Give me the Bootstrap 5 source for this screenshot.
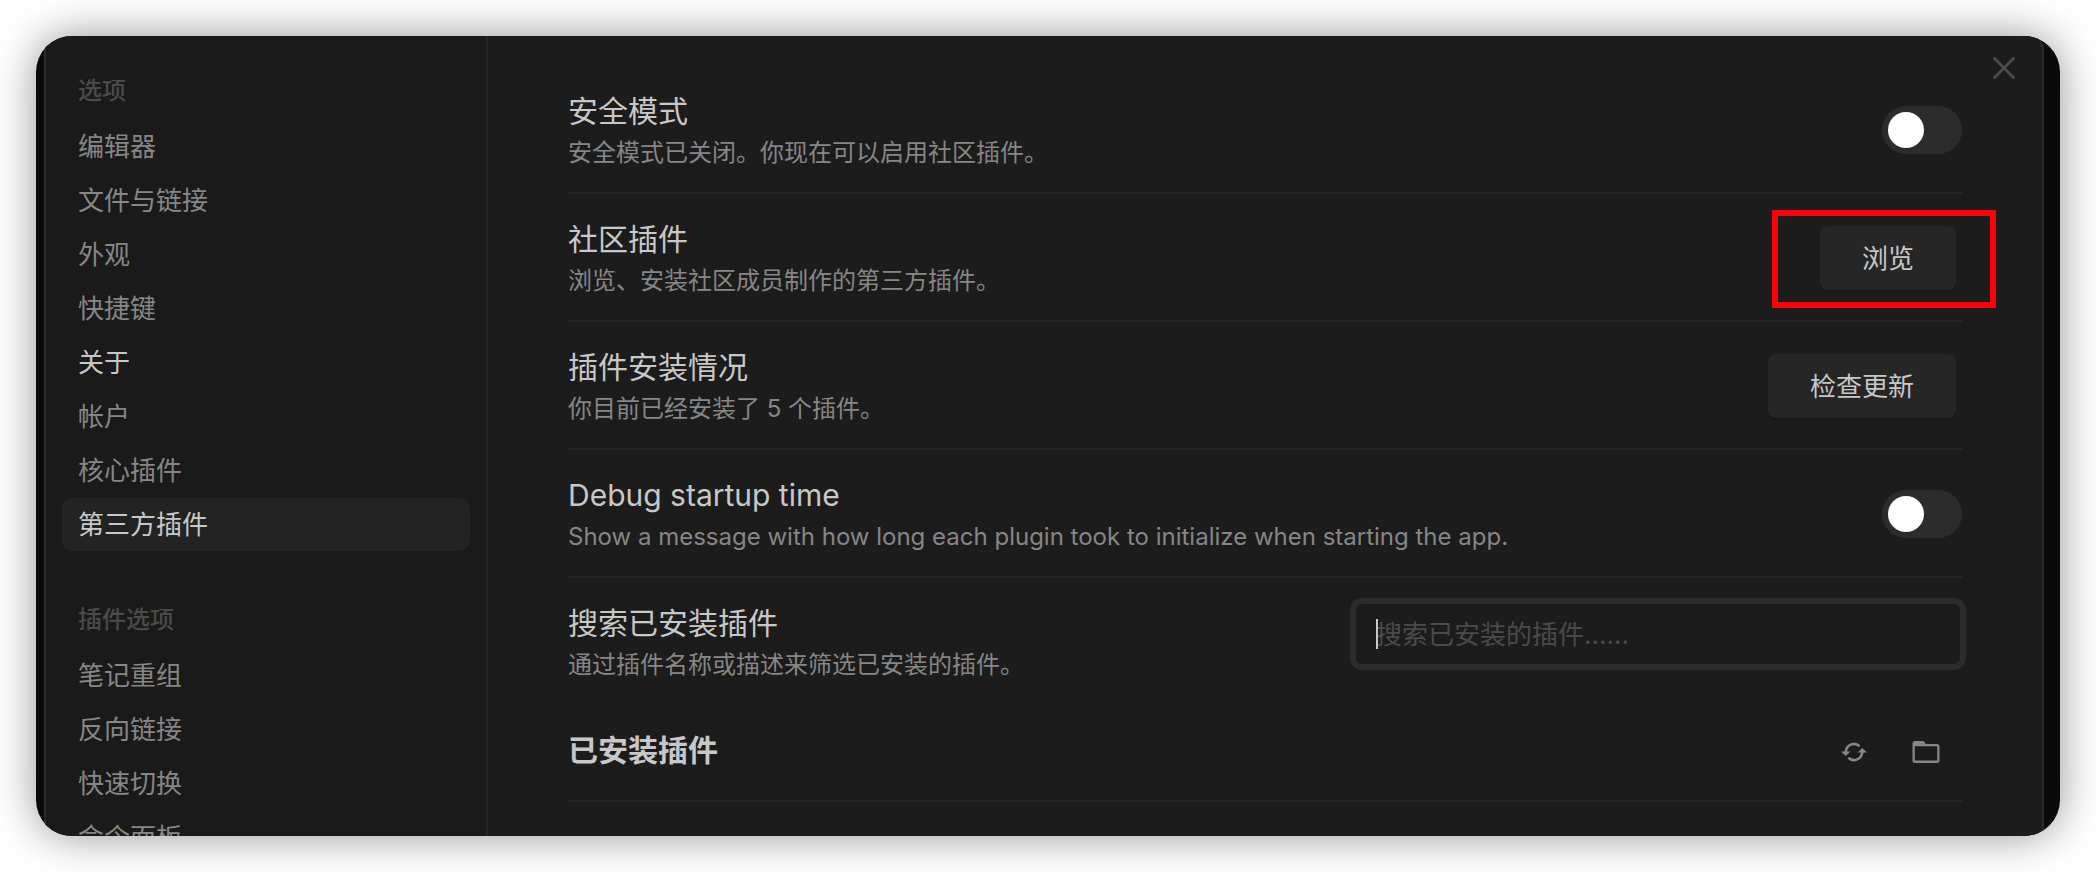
<!DOCTYPE html>
<html lang="zh-CN">
<head>
<meta charset="utf-8">
<meta name="viewport" content="width=device-width, initial-scale=1">
<title>设置 - 第三方插件</title>
<link rel="stylesheet" href="https://cdn.jsdelivr.net/npm/bootstrap@5.3.0/dist/css/bootstrap.min.css">
<style>
  :root {
    --text-normal: #c8c8c8;
    --text-muted: #868686;
    --text-faint: #4a4a4a;
    --line: #262626;
    --frame-line: #2c2c2c;
  }
  body {
    background: #fff;
    color: var(--text-normal);
    font-family: Inter, "Noto Sans CJK SC", sans-serif;
    font-size: 26px;
    padding: 36px;
  }
  .app-window {
    height: calc(100vh - 72px);
    background: #0a0a0a;
    border-radius: 36px;
    box-shadow: 0 0 44px rgba(0, 0, 0, .42);
  }
  .app-clip {
    border-radius: 36px;
    padding: 0 16px 0 8px;
  }
  .settings-modal {
    background: #1c1c1c;
    border: solid var(--frame-line);
    border-width: 0 2px;
    border-top-right-radius: 14px;
  }
  .settings-side {
    width: 442px;
    padding: 37px 16px 0;
    background: #1a1a1a;
    border-right: 2px solid var(--line);
  }
  .side-heading {
    margin: 0 16px 11px;
    font-size: 24px;
    line-height: 36px;
    font-weight: 500;
    color: var(--text-faint);
  }
  .side-group + .side-group { margin-top: 51px; }
  .side-group .nav { gap: 1px; }
  .side-group .nav-link {
    padding: 0 16px;
    line-height: 53px;
    border-radius: 10px;
    color: var(--text-muted);
  }
  .side-group .nav-link.bright,
  .side-group .nav-link.active { color: var(--text-normal); }
  .side-group .nav-link.active { background: #232323; }
  .settings-main { padding: 30px 80px 0; }
  .setting-row {
    padding: 22px 0 21px;
    border-bottom: 2px solid var(--line);
  }
  .setting-row.no-line { border-bottom: 0; }
  .setting-text { padding-top: 4px; }
  .setting-name {
    margin: 0 0 4px;
    font-size: 30px;
    line-height: 39px;
    font-weight: 400;
  }
  .setting-desc {
    margin: 0;
    font-size: 24px;
    line-height: 36px;
    color: var(--text-muted);
  }
  .toggle.form-check-input {
    width: 80px;
    height: 48px;
    margin: 0;
    padding: 6px;
    background: #2c2c2c;
    border: 0;
    border-radius: 24px;
  }
  .toggle::before {
    content: "";
    display: block;
    width: 36px;
    height: 36px;
    border-radius: 50%;
    background: #fff;
  }
  .toggle:checked::before { margin-left: auto; }
  .action-btn {
    padding: 2px 42px 0;
    margin-right: 6px;
    border: 0;
    border-radius: 8px;
    font-size: 26px;
    line-height: 62px;
    color: var(--text-normal);
    background: #262626;
    box-shadow: 0 2px 3px rgba(0, 0, 0, .2);
  }
  .highlight-box {
    top: -16px;
    right: -34px;
    bottom: -18px;
    left: -48px;
    border: 6px solid #fe0009;
    pointer-events: none;
  }
  .search-wrap {
    width: 608px;
    margin-top: 2px;
  }
  .search-wrap .form-control {
    height: 64px;
    padding: 0 20px;
    font-size: 26px;
    color: var(--text-normal);
    background: #1c1c1c;
    border: 2px solid var(--frame-line);
    border-radius: 8px;
    box-shadow: 0 0 0 4px var(--frame-line);
  }
  .search-wrap .form-control::placeholder { color: var(--text-faint); }
  .search-caret {
    left: 22px;
    top: 17px;
    width: 2px;
    height: 30px;
    background: var(--text-normal);
  }
  .installed-row {
    height: 98px;
    border-bottom: 2px solid var(--line);
  }
  .installed-row h2 {
    padding-bottom: 4px;
    font-size: 30px;
    line-height: 39px;
    font-weight: 700;
  }
  .icon-btn {
    width: 72px;
    height: 48px;
    border: 0;
    color: var(--text-muted);
  }
  .close-btn {
    top: 12px;
    right: 18px;
    width: 40px;
    height: 40px;
    color: #4c4c4c;
  }
</style>
</head>
<body>
<div class="app-window">
  <div class="app-clip h-100 overflow-hidden">
    <div class="settings-modal position-relative d-flex h-100">
      <aside class="settings-side flex-shrink-0">
        <section class="side-group">
          <h2 class="side-heading">选项</h2>
          <nav class="nav flex-column">
            <a class="nav-link" href="#editor">编辑器</a>
            <a class="nav-link" href="#files">文件与链接</a>
            <a class="nav-link" href="#appearance">外观</a>
            <a class="nav-link" href="#hotkeys">快捷键</a>
            <a class="nav-link bright" href="#about">关于</a>
            <a class="nav-link" href="#account">帐户</a>
            <a class="nav-link" href="#core">核心插件</a>
            <a class="nav-link active" aria-current="page" href="#community">第三方插件</a>
          </nav>
        </section>
        <section class="side-group">
          <h2 class="side-heading">插件选项</h2>
          <nav class="nav flex-column">
            <a class="nav-link" href="#composer">笔记重组</a>
            <a class="nav-link" href="#backlinks">反向链接</a>
            <a class="nav-link" href="#switcher">快速切换</a>
            <a class="nav-link" href="#palette">命令面板</a>
          </nav>
        </section>
      </aside>

      <main class="settings-main flex-grow-1">
        <div class="setting-row d-flex justify-content-between align-items-center">
          <div class="setting-text">
            <label class="setting-name d-block" for="safe-mode">安全模式</label>
            <p class="setting-desc">安全模式已关闭。你现在可以启用社区插件。</p>
          </div>
          <input class="form-check-input toggle" type="checkbox" role="switch" id="safe-mode">
        </div>
        <div class="setting-row d-flex justify-content-between align-items-center">
          <div class="setting-text">
            <h3 class="setting-name">社区插件</h3>
            <p class="setting-desc">浏览、安装社区成员制作的第三方插件。</p>
          </div>
          <div class="position-relative d-flex">
            <button type="button" class="btn action-btn">浏览</button>
            <div class="highlight-box position-absolute"></div>
          </div>
        </div>
        <div class="setting-row d-flex justify-content-between align-items-center">
          <div class="setting-text">
            <h3 class="setting-name">插件安装情况</h3>
            <p class="setting-desc">你目前已经安装了 5 个插件。</p>
          </div>
          <button type="button" class="btn action-btn">检查更新</button>
        </div>
        <div class="setting-row d-flex justify-content-between align-items-center">
          <div class="setting-text">
            <label class="setting-name d-block" for="debug-startup">Debug startup time</label>
            <p class="setting-desc">Show a message with how long each plugin took to initialize when starting the app.</p>
          </div>
          <input class="form-check-input toggle" type="checkbox" role="switch" id="debug-startup">
        </div>
        <div class="setting-row no-line d-flex justify-content-between align-items-start">
          <div class="setting-text">
            <label class="setting-name d-block" for="plugin-search">搜索已安装插件</label>
            <p class="setting-desc">通过插件名称或描述来筛选已安装的插件。</p>
          </div>
          <div class="search-wrap position-relative">
            <input class="form-control" type="text" id="plugin-search" placeholder="搜索已安装的插件……">
            <span class="search-caret position-absolute"></span>
          </div>
        </div>
        <div class="installed-row d-flex justify-content-between align-items-center">
          <h2 class="m-0">已安装插件</h2>
          <div class="d-flex">
            <button type="button" class="btn icon-btn p-0 d-flex align-items-center justify-content-center" aria-label="重新加载插件">
              <svg width="26" height="20" viewBox="0 0 26 20" fill="none" stroke="currentColor" stroke-width="2.6">
                <path d="M4.800 10A8.200 8.200 0 0 1 18.600 4.200M21.200 10A8.200 8.200 0 0 1 7.400 15.800"/>
                <path d="M0 9.500h9.400L4.800 14zM26 10.500h-9.400L21.200 6z" fill="currentColor" stroke="none"/>
              </svg>
            </button>
            <button type="button" class="btn icon-btn p-0 d-flex align-items-center justify-content-center" aria-label="打开插件文件夹">
              <svg width="28" height="22" viewBox="0 0 28 22" fill="currentColor" fill-rule="evenodd">
                <path d="M3 0H10.500Q12 0 12.700 1.200L13.600 3H25Q27.500 3 27.500 5.500V19.500Q27.500 22 25 22H3Q.5 22 .5 19.500V2.500Q.5 0 3 0ZM2.800 5.300V19.600H25.200V5.300Z"/>
              </svg>
            </button>
          </div>
        </div>
      </main>

      <button type="button" class="btn close-btn position-absolute border-0 p-0 d-flex align-items-center justify-content-center" aria-label="关闭">
        <svg width="22" height="22" viewBox="0 0 22 22" stroke="currentColor" stroke-width="2.600" stroke-linecap="round">
          <path d="M1.500 1.500l19 19M20.500 1.500l-19 19"/>
        </svg>
      </button>
    </div>
  </div>
</div>
<script src="https://cdn.jsdelivr.net/npm/bootstrap@5.3.0/dist/js/bootstrap.bundle.min.js"></script>
</body>
</html>
